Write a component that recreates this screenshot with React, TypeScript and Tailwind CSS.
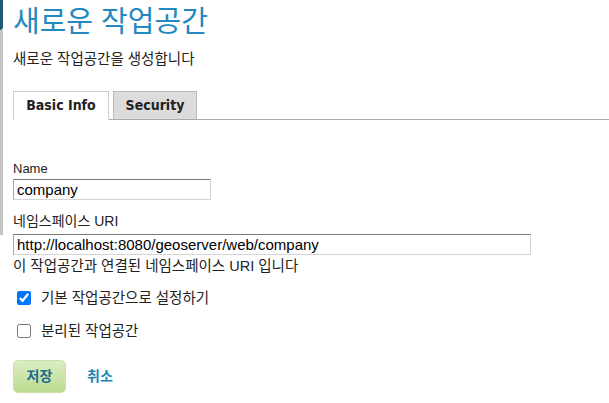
import React, { useState } from "react";

const FONT = { fontFamily: '"Liberation Sans", "Noto Sans CJK KR", sans-serif' };
const TAB_FONT = { fontFamily: '"DejaVu Sans Condensed", "DejaVu Sans", sans-serif' };

const App = () => {
  const [tab, setTab] = useState("basic");
  const [isDefault, setIsDefault] = useState(true);
  const [isolated, setIsolated] = useState(false);

  return (
    <div className="flex min-h-[403px] w-[609px] bg-white text-[13px] text-[#222]" style={FONT}>
      {/* left edge strip */}
      <div className="flex w-[3px] flex-col">
        <div className="h-[30px] rounded-br-[3px] bg-[#1d5a73]" />
        <div className="h-[205px] bg-[#c4c4c4]" />
      </div>

      <div className="flex-1 pl-[10px]">
        <h1 className="mt-[5px] text-[29px] leading-[34px] text-[#2589bf]">새로운 작업공간</h1>
        <p className="mt-[12px] text-[14.5px] leading-[16px]">새로운 작업공간을 생성합니다</p>

        {/* Tabs */}
        <div className="mt-[24px] flex gap-[4px] border-b border-[#aaa]">
          <button
            onClick={() => setTab("basic")}
            className={`-mb-px h-[29px] w-[96px] border border-[#ccc] text-[14px] font-bold ${
              tab === "basic" ? "border-b-white bg-white" : "border-b-[#aaa] bg-[#dcdcdc]"
            }`}
            style={TAB_FONT}
          >
            Basic Info
          </button>
          <button
            onClick={() => setTab("security")}
            className={`-mb-px h-[29px] w-[84px] border border-[#bbb] text-[14px] font-bold ${
              tab === "security" ? "border-b-white bg-white" : "border-b-[#aaa] bg-[#dcdcdc]"
            }`}
            style={TAB_FONT}
          >
            Security
          </button>
        </div>

        {/* Form */}
        <div className="mt-[41px] flex flex-col">
          <label className="leading-[16px]">Name</label>
          <input
            defaultValue="company"
            className="mt-[2px] h-[21px] w-[198px] border border-b-[#d4d4d4] border-l-[#a9a9a9] border-r-[#d4d4d4] border-t-[#7a7a7a] px-[3px] text-[15px] leading-[19px] text-black outline-none"
          />

          <label className="mt-[12px] text-[14px] leading-[18px]">네임스페이스 URI</label>
          <input
            defaultValue="http://localhost:8080/geoserver/web/company"
            className="mt-[4px] h-[21px] w-[518px] border border-b-[#d4d4d4] border-l-[#a9a9a9] border-r-[#d4d4d4] border-t-[#7a7a7a] px-[3px] text-[15px] leading-[19px] text-black outline-none"
          />
          <span className="mt-[2px] text-[14.5px] leading-[18px]">이 작업공간과 연결된 네임스페이스 URI 입니다</span>

          <label className="mt-[14px] flex items-center gap-[10px] pl-[4px] text-[14.5px] leading-[18px]">
            <input
              type="checkbox"
              checked={isDefault}
              onChange={(e) => setIsDefault(e.target.checked)}
              className="m-0 h-[14px] w-[14px] accent-[#0075ff]"
            />
            기본 작업공간으로 설정하기
          </label>
          <label className="mt-[15px] flex items-center gap-[10px] pl-[4px] text-[14.5px] leading-[18px]">
            <input
              type="checkbox"
              checked={isolated}
              onChange={(e) => setIsolated(e.target.checked)}
              className="m-0 h-[14px] w-[14px] accent-[#0075ff]"
            />
            분리된 작업공간
          </label>

          <div className="mt-[20px] flex items-center gap-[21px]">
            <button className="h-[33px] w-[53px] rounded-[5px] border border-[#c9e0a9] bg-gradient-to-b from-[#dcedc2] to-[#bcdb8f] text-[14px] font-bold text-[#1b6d8f]">
              저장
            </button>
            <a href="#" className="text-[14px] font-bold text-[#1c86b4]">
              취소
            </a>
          </div>
        </div>
      </div>
    </div>
  );
};

export default App;
